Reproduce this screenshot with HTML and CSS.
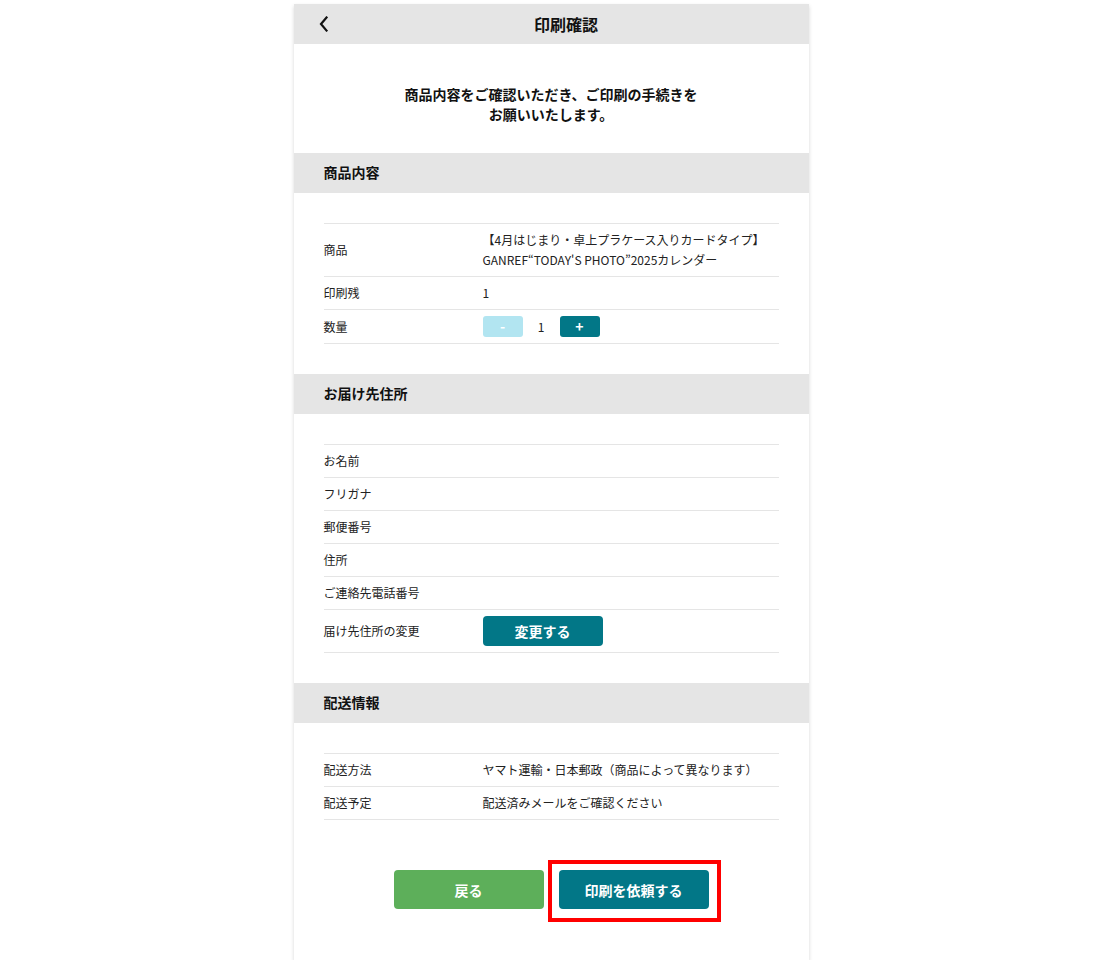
FILE: index.html
```html
<!DOCTYPE html>
<html lang="ja">
<head>
    <meta charset="UTF-8">
    <meta name="viewport" content="width=device-width, initial-scale=1.0">
    <title>印刷確認</title>
    <link rel="stylesheet" href="styles.css">
</head>
<body>
    <div class="page">
        <header class="topbar">
            <a class="back" href="#">
                <svg width="12" height="16" viewBox="0 0 12 16"><path d="M8.5 1.5 L3 8 L8.5 14.5" fill="none" stroke="#111" stroke-width="2.2" stroke-linecap="square" stroke-linejoin="miter"/></svg>
            </a>
            <h1>印刷確認</h1>
        </header>

        <p class="lead">商品内容をご確認いただき、ご印刷の手続きを<br>お願いいたします。</p>

        <h2 class="section-title">商品内容</h2>
        <div class="section-body">
            <table class="info">
                <tr>
                    <th>商品</th>
                    <td>【4月はじまり・卓上プラケース入りカードタイプ】<br>GANREF“TODAY'S PHOTO”2025カレンダー</td>
                </tr>
                <tr>
                    <th>印刷残</th>
                    <td>1</td>
                </tr>
                <tr>
                    <th>数量</th>
                    <td>
                        <div class="qty">
                            <button class="qty-btn minus">-</button>
                            <span class="qty-num">1</span>
                            <button class="qty-btn plus">+</button>
                        </div>
                    </td>
                </tr>
            </table>
        </div>

        <h2 class="section-title">お届け先住所</h2>
        <div class="section-body">
            <table class="info">
                <tr><th>お名前</th><td></td></tr>
                <tr><th>フリガナ</th><td></td></tr>
                <tr><th>郵便番号</th><td></td></tr>
                <tr><th>住所</th><td></td></tr>
                <tr><th>ご連絡先電話番号</th><td></td></tr>
                <tr>
                    <th>届け先住所の変更</th>
                    <td><button class="change-btn">変更する</button></td>
                </tr>
            </table>
        </div>

        <h2 class="section-title">配送情報</h2>
        <div class="section-body">
            <table class="info">
                <tr><th>配送方法</th><td>ヤマト運輸・日本郵政（商品によって異なります）</td></tr>
                <tr><th>配送予定</th><td>配送済みメールをご確認ください</td></tr>
            </table>
        </div>

        <div class="actions">
            <button class="btn btn-back">戻る</button>
            <button class="btn btn-submit">印刷を依頼する</button>
        </div>
    </div>
</body>
</html>
```

FILE: styles.css
```css
body {
    margin: 0;
    background-color: #fff;
    font-family: "Noto Sans CJK JP", "Noto Sans", sans-serif;
    color: #222;
}

.page {
    width: 515px;
    margin: 4px auto 0;
    padding-bottom: 51px;
    background-color: #fff;
    box-shadow: 0 2px 4px rgba(0, 0, 0, 0.16);
}

.topbar {
    position: relative;
    height: 40px;
    background-color: #e5e5e5;
    display: flex;
    align-items: center;
    justify-content: center;
}

.topbar h1 {
    margin: 0;
    padding-left: 30px;
    font-size: 16px;
    line-height: 38px;
    font-weight: bold;
    color: #111;
}

.back {
    position: absolute;
    left: 24px;
    top: 12px;
    display: block;
    line-height: 0;
}

.lead {
    margin: 0;
    padding: 40px 30px 29px;
    font-size: 14px;
    line-height: 20px;
    font-weight: bold;
    text-align: center;
    color: #111;
}

.section-title {
    margin: 0;
    height: 40px;
    line-height: 38px;
    padding: 0 30px;
    background-color: #e5e5e5;
    font-size: 14px;
    font-weight: bold;
    color: #111;
}

.section-body {
    padding: 30px;
}

.info {
    width: 100%;
    border-collapse: collapse;
    border-top: 1px solid #e5e5e5;
    font-size: 12px;
    line-height: 20px;
}

.info th,
.info td {
    padding: 6px 0;
    border-bottom: 1px solid #e5e5e5;
    text-align: left;
    vertical-align: middle;
    font-weight: normal;
    color: #222;
}

.info th {
    width: 159px;
}

.qty {
    display: flex;
    align-items: center;
}

.qty-btn {
    width: 40px;
    height: 21px;
    border: none;
    border-radius: 3px;
    color: #fff;
    font-size: 14px;
    font-weight: bold;
    font-family: inherit;
    padding: 0;
    line-height: 21px;
}

.qty-btn.minus {
    background-color: #b2e5f1;
}

.qty-btn.plus {
    background-color: #027787;
}

.qty-num {
    width: 37px;
    text-align: center;
    font-size: 12px;
}

.change-btn {
    width: 120px;
    height: 30px;
    border: none;
    border-radius: 4px;
    background-color: #027787;
    color: #fff;
    font-family: inherit;
    font-size: 14px;
    font-weight: bold;
    display: block;
    padding: 0;
}

.actions {
    display: flex;
    justify-content: center;
    gap: 15px;
    padding-top: 20px;
}

.btn {
    width: 150px;
    height: 39px;
    border: none;
    border-radius: 4px;
    color: #fff;
    font-family: inherit;
    font-size: 14px;
    font-weight: bold;
}

.btn-back {
    background-color: #5daf5a;
}

.btn-submit {
    position: relative;
    background-color: #027787;
}

/* 注目枠 */
.btn-submit::after {
    content: "";
    position: absolute;
    top: -10px;
    bottom: -13px;
    left: -11px;
    right: -12px;
    border: 4px solid #ff0000;
}
```
